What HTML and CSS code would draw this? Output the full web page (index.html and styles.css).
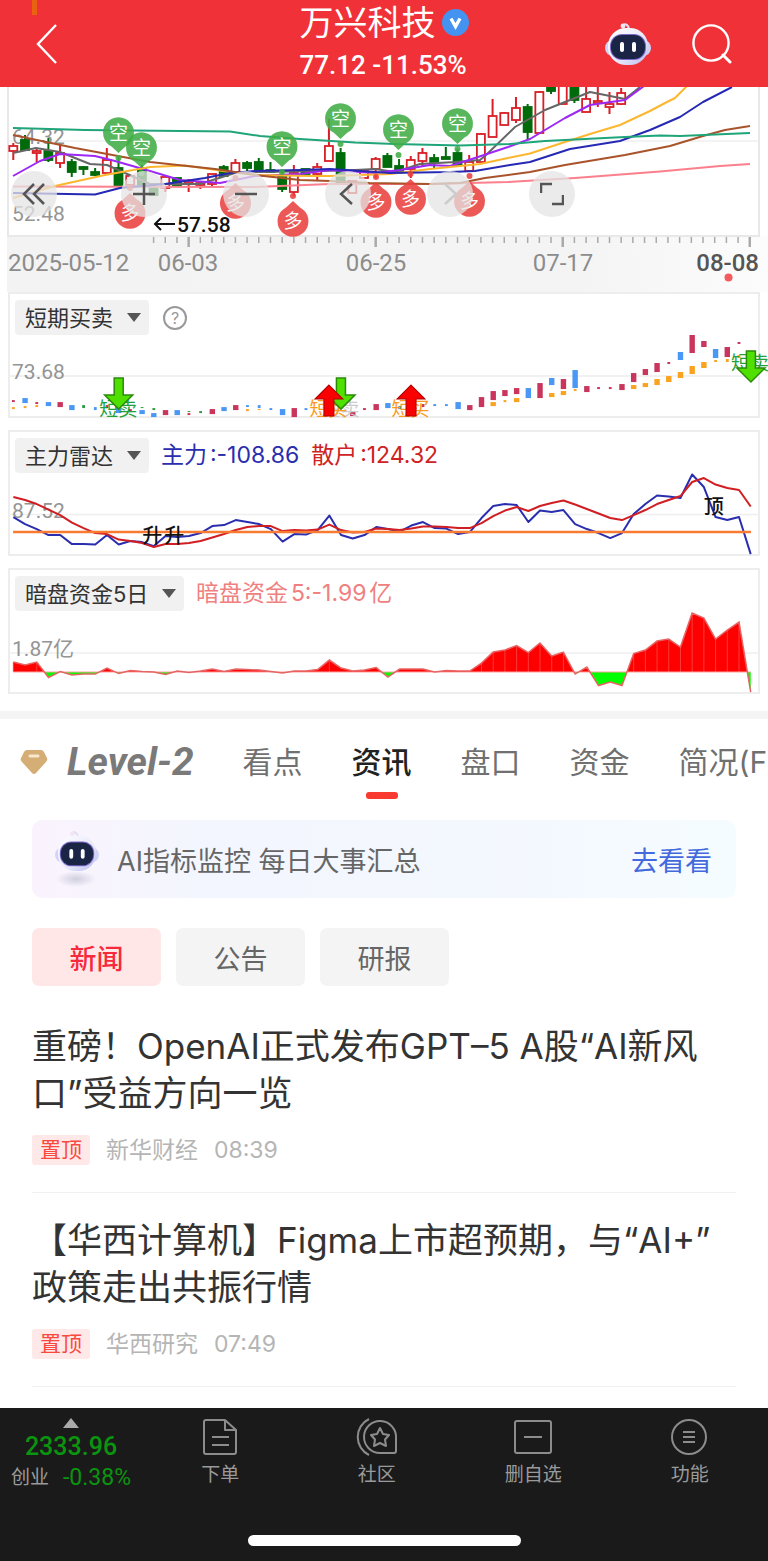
FILE: index.html
```html
<!DOCTYPE html>
<html lang="zh-CN">
<head>
<meta charset="utf-8">
<meta name="viewport" content="width=device-width, initial-scale=1">
<title>万兴科技</title>
<link rel="stylesheet" href="styles.css">
</head>
<body>
<svg class="defs" aria-hidden="true">
  <defs>
    <linearGradient id="shell" x1="0" y1="0" x2="1" y2="1">
      <stop offset="0" stop-color="#ffffff"/><stop offset="0.6" stop-color="#e6e8fb"/><stop offset="1" stop-color="#b9b8ec"/>
    </linearGradient>
    <radialGradient id="shade"><stop offset="0" stop-color="#cfcfdc"/><stop offset="1" stop-color="#cfcfdc" stop-opacity="0"/></radialGradient>
    <symbol id="robot" viewBox="0 0 48 44">
      <path d="M19 4C20 1 24 2 25 7" fill="none" stroke="#e4dcf2" stroke-width="2"/>
      <circle cx="19" cy="4" r="2.4" fill="#f3e6f4"/>
      <rect x="1" y="18" width="46" height="16" rx="8" fill="#cfd3f5"/>
      <rect x="4" y="6" width="40" height="37" rx="18" fill="url(#shell)"/>
      <rect x="6" y="12" width="36" height="26" rx="12" fill="#7a67c8"/>
      <rect x="7" y="13" width="34" height="24" rx="11" fill="#1a2546"/>
      <rect x="16" y="20" width="4" height="10" rx="2" fill="#fff"/>
      <rect x="28" y="20" width="4" height="10" rx="2" fill="#fff"/>
    </symbol>
  </defs>
</svg>

<header class="topbar">
  <span class="topbar-mark"></span>
  <button class="icon-btn back" type="button" aria-label="返回">
    <svg width="22" height="40" viewBox="0 0 22 40"><path d="M20 1 2 20 20 39" fill="none" stroke="#fff" stroke-width="2.4"/></svg>
  </button>
  <div class="stock">
    <h1 class="stock-name">万兴科技
      <svg class="badge" width="27" height="27" viewBox="0 0 27 27"><circle cx="13.500" cy="13.500" r="13.500" fill="#4593f0"/><path d="M9 9.500 13.500 17.500 18 9.500" fill="none" stroke="#fff" stroke-width="3.400"/></svg>
    </h1>
    <p class="stock-price">77.12 -11.53%</p>
  </div>
  <div class="topbar-tools">
    <button class="icon-btn" type="button" aria-label="智能助手"><svg width="48" height="44"><use href="#robot"/></svg></button>
    <button class="icon-btn" type="button" aria-label="搜索">
      <svg width="40" height="40" viewBox="0 0 40 40"><g fill="none" stroke="#fff" stroke-width="2.400"><circle cx="19" cy="19" r="17.600"/><path d="M31 31 38 38" stroke-linecap="round" stroke-width="3"/></g></svg>
    </button>
  </div>
</header>

<main class="content">
  <section class="kline" aria-label="K线图">
    <svg id="kline" class="kline-svg" viewBox="0 87 768 205">
      <defs><linearGradient id="axisbg" x1="0" x2="1"><stop offset="0" stop-color="#f3f3f3"/><stop offset="0.750" stop-color="#f4f4f4"/><stop offset="1" stop-color="#fcfcfc"/></linearGradient></defs>
      <rect x="7" y="236" width="761" height="56" fill="url(#axisbg)"/>
      <path d="M8 141H759" stroke="#efefef" stroke-width="1.500"/>
      <path d="M8 87V236H759V87" fill="none" stroke="#e8e8e8" stroke-width="2"/>
      <text class="scale" x="12" y="144">64.32</text>
      <text class="scale" x="12" y="221">52.48</text>
      <g id="candles"></g>
      <g fill="none" stroke-width="2" stroke-linejoin="round">
        <path stroke="#fb7f8c" d="M13 186.500 255 187 330 184 430 184 508 182 575 178 660 171.500 720 166 750 164"/>
        <path stroke="#666" d="M13 153 36 148 60 152 90 164 107 165 125 173 150 184 200 184 235 173 260 172 320 171 355 170 375 169 395 172 420 164 455 162 480 160 485 156 515 127 545 110 590 92 625 99 640 87"/>
        <path stroke="#9d28f5" d="M13 176 40 161 60 154 95 156 115 161 150 171 180 180 220 183 255 176 300 174 330 170 375 173 400 170 430 165 450 166 475 158 508 147 530 139 565 118 590 105 625 100 640 89 644 86"/>
        <path stroke="#fcb72f" d="M13 198 55 186 105 175 150 167 185 165.500 230 172 255 175 310 176 330 176 390 174 430 169 480 164 508 158 530 153.500 565 142 590 134 620 125 650 111 665 103 675 98 687 86"/>
        <path stroke="#2629b4" d="M13 193 95 194.500 120 188 165 184 205 178 230 173 255 171 300 170 330 169 390 173 450 172 475 171 510 165 530 162 570 149 620 141 650 130 680 117 703 102 732 87"/>
        <path stroke="#a9532b" d="M13 135 75 148 150 162 215 169 255 175 300 180 330 181 370 183 430 184 460 183 485 178 530 172 565 165 625 155 670 146 703 136 725 130 750 126"/>
        <path stroke="#1fa579" d="M13 128 50 129 85 130 230 131.500 260 136 300 139 355 142.500 395 144 460 145.500 510 144 545 141 625 137 660 135.500 680 136 750 133"/>
      </g>
      <g id="signals"></g>
      <path d="M155 224H175M161 218 155 224 161 230" fill="none" stroke="#111" stroke-width="2"/>
      <text class="low" x="177" y="232">57.58</text>
      <g id="ticks" stroke="#aaa"></g>
      <text class="date" x="8" y="271">2025-05-12</text>
      <text class="date mid" x="188" y="271">06-03</text>
      <text class="date mid" x="376" y="271">06-25</text>
      <text class="date mid" x="563" y="271">07-17</text>
      <text class="date end" x="759" y="271">08-08</text>
      <circle cx="728.500" cy="277.500" r="4" fill="#f35b5e"/>
    </svg>
    <div class="chart-tools">
      <button class="round first" type="button" aria-label="最左"><svg width="24" height="24" viewBox="0 0 24 24"><path d="M12 2 2 12 12 22M22 2 12 12 22 22"/></svg></button>
      <button class="round" type="button" aria-label="放大"><svg width="24" height="24" viewBox="0 0 24 24"><path d="M12 1V23M1 12H23"/></svg></button>
      <button class="round" type="button" aria-label="缩小"><svg width="24" height="24" viewBox="0 0 24 24"><path d="M1 12H23"/></svg></button>
      <button class="round" type="button" aria-label="左移"><svg width="24" height="24" viewBox="0 0 24 24"><path d="M16 2 5 12 16 22"/></svg></button>
      <button class="round off" type="button" aria-label="右移" disabled><svg width="24" height="24" viewBox="0 0 24 24"><path d="M7 2 18 12 7 22"/></svg></button>
      <button class="round" type="button" aria-label="全屏"><svg width="24" height="24" viewBox="0 0 24 24"><path d="M1 11V2H12M23 13V22H12" stroke-width="3"/></svg></button>
    </div>
  </section>

  <section class="panel">
    <div class="panel-head">
      <label class="pick"><select aria-label="指标一"><option>短期买卖</option></select><svg class="caret" width="14" height="9"><path d="M0 0H14L7 9Z"/></svg></label>
      <button class="icon-btn help" type="button" aria-label="帮助">?</button>
    </div>
    <svg class="plot" viewBox="10 335 747 81">
      <path d="M10 376H757" stroke="#ececec" stroke-width="1.500"/>
      <text class="scale" x="12" y="379">73.68</text>
      <g id="trade"></g>
      <g class="sign">
        <text class="sell" x="118" y="416">短卖</text>
        <text class="faded" x="340" y="416">短卖</text>
        <text class="buy" x="328" y="416">短买</text>
        <text class="buy" x="410" y="416">短买</text>
        <text class="sell" x="749" y="370">短卖</text>
      </g>
      <g id="arrows"></g>
    </svg>
  </section>

  <section class="panel">
    <div class="panel-head">
      <label class="pick"><select aria-label="指标二"><option>主力雷达</option></select><svg class="caret" width="14" height="9"><path d="M0 0H14L7 9Z"/></svg></label>
      <span class="value blue">主力:-108.86</span><span class="value red">散户:124.32</span>
    </div>
    <svg class="plot" viewBox="10 473 747 81">
      <path d="M10 514.500H757" stroke="#efefef" stroke-width="1.500"/>
      <text class="scale" x="12" y="518">87.52</text>
      <g id="radar" fill="none" stroke-width="2" stroke-linejoin="round"></g>
      <text class="mark" x="152" y="543">升</text><text class="mark" x="174" y="543">升</text><text class="mark" x="713" y="514">顶</text>
    </svg>
  </section>

  <section class="panel">
    <div class="panel-head">
      <label class="pick"><select aria-label="指标三"><option>暗盘资金5日</option></select><svg class="caret" width="14" height="9"><path d="M0 0H14L7 9Z"/></svg></label>
      <span class="value pink">暗盘资金5:-1.99亿</span>
    </div>
    <svg class="plot" viewBox="10 611 747 81">
      <defs>
        <clipPath id="above"><rect x="0" y="600" width="768" height="72"/></clipPath>
        <clipPath id="below"><rect x="0" y="672" width="768" height="22"/></clipPath>
      </defs>
      <path d="M10 653H757" stroke="#efefef" stroke-width="1.500"/>
      <text class="scale" x="12" y="656">1.87亿</text>
      <g id="flow"></g>
    </svg>
  </section>

  <nav class="tabs" aria-label="栏目">
    <svg class="gem" width="28" height="26" viewBox="0 0 28 26"><path d="M7 1H21Q23 1 24 3L27 9Q28 11 26 13L16 24Q14 26 12 24L2 13Q0 11 1 9L4 3Q5 1 7 1Z" fill="#d5ae76"/><path d="M10 7H18" stroke="#f8e8cd" stroke-width="3" stroke-linecap="round"/></svg>
    <a class="tab level" href="#level2">Level-2</a>
    <a class="tab" href="#views">看点</a>
    <a class="tab current" href="#news" aria-current="page">资讯</a>
    <a class="tab" href="#book">盘口</a>
    <a class="tab" href="#funds">资金</a>
    <a class="tab" href="#profile">简况(F10)</a>
  </nav>

  <div class="feed" id="news">
    <div class="banner">
      <svg class="banner-bot" width="46" height="58" viewBox="0 0 46 58"><ellipse cx="22" cy="49" rx="20" ry="8" fill="url(#shade)"/><use href="#robot" x="0" y="0" width="46" height="42"/></svg>
      <span class="banner-text">AI指标监控 每日大事汇总</span>
      <a class="banner-link" href="#monitor">去看看</a>
    </div>
    <div class="chips">
      <button class="chip on" type="button">新闻</button>
      <button class="chip" type="button">公告</button>
      <button class="chip" type="button">研报</button>
    </div>
    <article class="story">
      <h2 class="story-title">重磅！OpenAI正式发布GPT–5 A股“AI新风口”受益方向一览</h2>
      <p class="story-meta"><span class="pin">置顶</span><span>新华财经</span><time>08:39</time></p>
    </article>
    <article class="story">
      <h2 class="story-title">【华西计算机】Figma上市超预期，与“AI+”政策走出共振行情</h2>
      <p class="story-meta"><span class="pin">置顶</span><span>华西研究</span><time>07:49</time></p>
    </article>
  </div>
</main>

<footer class="dock">
  <div class="dock-row">
    <button class="index" type="button">
      <svg width="16" height="10"><path d="M8 0 16 10H0Z" fill="#aaa"/></svg>
      <span class="index-value">2333.96</span>
      <span class="index-line"><span class="index-name">创业</span><span>-0.38%</span></span>
    </button>
    <button class="dock-item" type="button">
      <svg width="38" height="38" viewBox="0 0 38 38"><path d="M24 2H5Q3 2 3 4V34Q3 36 5 36H33Q35 36 35 34V12L24 2V12H35"/><path d="M11 19H28M11 27H28"/></svg>
      <span>下单</span>
    </button>
    <button class="dock-item" type="button">
      <svg width="42" height="38" viewBox="0 0 42 38"><path d="M40 20V33Q40 35 38 35H24A16 16 0 1 1 40 20Z"/><path d="M13 1A20 20 0 0 0 13 37"/><path d="M24 10 27 16 33 17 29 21.500 30 28 24 25 18 28 19 21.500 15 17 21 16Z"/></svg>
      <span>社区</span>
    </button>
    <button class="dock-item" type="button">
      <svg width="40" height="38" viewBox="0 0 40 38"><rect x="2" y="3" width="36" height="32" rx="2"/><path d="M11 19H29"/></svg>
      <span>删自选</span>
    </button>
    <button class="dock-item" type="button">
      <svg width="38" height="38" viewBox="0 0 38 38"><circle cx="18" cy="19" r="17"/><path d="M12 14H24M12 19H24M12 24H24"/></svg>
      <span>功能</span>
    </button>
  </div>
  <div class="home-bar"></div>
</footer>
<script src="charts.js"></script>
</body>
</html>
```
FILE: styles.css
```css
* { box-sizing: border-box; }

body {
  margin: 0;
  min-height: 100vh;
  display: flex;
  flex-direction: column;
  background: #fff;
  color: #333;
  font-family: Inter, "Noto Sans CJK SC", sans-serif;
}

h1, h2, p { margin: 0; font-weight: 400; }
a { color: inherit; text-decoration: none; }
button { border: 0; padding: 0; background: none; font: inherit; color: inherit; }
svg { display: block; }
.defs { position: absolute; width: 0; height: 0; }

.topbar {
  position: relative;
  display: grid;
  grid-template-columns: 1fr auto 1fr;
  align-items: center;
  height: 87px;
  padding: 0 36px;
  background: #f03238;
  color: #fff;
}
.topbar-mark { position: absolute; left: 32px; top: 0; width: 5px; height: 15px; background: #e8620f; }
.icon-btn { display: flex; align-items: center; justify-content: center; }
.back { justify-self: start; }
.stock-name { display: flex; align-items: center; gap: 6px; font-size: 34px; line-height: 42px; }
.stock-price { font: 500 26px/42px Roboto, sans-serif; }
.topbar-tools { display: flex; justify-content: flex-end; align-items: center; gap: 40px; }

.content { overflow: hidden; }
.kline { position: relative; }
.kline-svg { width: 100%; height: auto; }
.scale { font: 21px Roboto, "Noto Sans CJK SC", sans-serif; fill: #949494; }
.date { font: 24px Roboto, sans-serif; fill: #8c8c8c; }
.date.mid { text-anchor: middle; }
.date.end { text-anchor: end; fill: #555; font-weight: 500; }
.low { font: 500 21px Roboto, sans-serif; fill: #111; }
.signal-text { font: 19px "Noto Sans CJK SC", sans-serif; fill: #fff; text-anchor: middle; }

.chart-tools {
  position: absolute;
  left: 11px;
  top: 41%;
  width: 73.4%;
  display: flex;
  justify-content: space-between;
}
.round {
  display: grid;
  place-items: center;
  width: 46px;
  height: 46px;
  border-radius: 50%;
  background: rgba(228, 228, 228, 0.75);
}
.round.first { margin-right: 8px; }
.round path { fill: none; stroke: #555; stroke-width: 2.5; }
.round.off path { stroke: #ccc; }

.panel { margin: 0 8px 12px; border: 2px solid #ededed; }
.panel-head { display: flex; align-items: center; gap: 12px; padding: 6px 5px 0; }
.pick { position: relative; display: flex; align-items: center; }
.pick select {
  appearance: none;
  height: 35px;
  padding: 0 35px 0 10px;
  border: 0;
  border-radius: 4px;
  background: #f1f1f1;
  color: #333;
  font: 22px Inter, "Noto Sans CJK SC", sans-serif;
  text-autospace: normal;
}
.caret { position: absolute; right: 8px; fill: #555; pointer-events: none; }
.help {
  width: 24px;
  height: 24px;
  margin-left: 2px;
  border: 2px solid #999;
  border-radius: 50%;
  color: #999;
  font-size: 16px;
  line-height: 20px;
}
.value { font-size: 23px; line-height: 35px; text-autospace: normal; }
.blue { color: #2a2eae; }
.red { color: #cf2222; }
.pink { color: #f08080; }
.plot { width: 100%; height: auto; overflow: visible; }
.sign { font: 19px "Noto Sans CJK SC", sans-serif; text-anchor: middle; }
.sell { fill: #22a03c; }
.buy { fill: #fb9a20; }
.faded { fill: #ccc; }
.mark { font: 500 20px "Noto Sans CJK SC", sans-serif; fill: #111; text-anchor: middle; }

.tabs {
  display: flex;
  align-items: center;
  gap: 49px;
  height: 94px;
  margin-top: 17px;
  padding-left: 20px;
  border-top: 8px solid #f4f4f4;
  white-space: nowrap;
}
.gem { flex: none; margin-right: -30px; }
.tab { position: relative; color: #707070; font-size: 30px; line-height: 44px; }
.level { font: italic 700 39px/44px Roboto, sans-serif; color: #7a7a7a; }
.current { color: #222; font-weight: 500; }
.current::after {
  content: "";
  position: absolute;
  left: 50%;
  bottom: -15px;
  width: 32px;
  height: 7px;
  margin-left: -16px;
  border-radius: 3px;
  background: #f93a30;
}

.feed { padding: 15px 32px 18px; }
.banner {
  display: flex;
  align-items: center;
  height: 78px;
  padding: 0 24px 0 22px;
  border-radius: 10px;
  background: linear-gradient(90deg, #faf3fe, #f3f6fe 24%, #f3f7fe 60%, #f5fcff);
}
.banner-text { margin-left: 17px; color: #666; font-size: 27px; }
.banner-link { margin-left: auto; color: #4369dc; font-size: 27px; }
.chips { display: flex; gap: 15px; margin: 30px 0 13px; }
.chip { width: 129px; height: 58px; border-radius: 7px; background: #f4f4f4; color: #666; font-size: 27px; }
.chip.on { background: #ffe7e8; color: #f7293c; font-weight: 500; }

.story { padding: 24px 0 27px; border-bottom: 1px solid #f1f1f1; }
.story-title { font-size: 35px; line-height: 47px; color: #333; }
.story-meta {
  display: flex;
  align-items: center;
  gap: 16px;
  margin-top: 18px;
  color: #b5b5b5;
  font-size: 23px;
  line-height: 30px;
}
.pin { padding: 0 8px; border-radius: 3px; background: #ffe8e8; color: #f9493f; font-size: 21px; }

.dock { margin-top: auto; padding-bottom: 15px; background: #1a1a1a; color: #9a9a9a; }
.dock-row { display: grid; grid-template-columns: 142px repeat(4, 1fr); height: 127px; align-items: start; }
.index { display: flex; flex-direction: column; align-items: center; padding-top: 10px; color: #0a9410; font: 500 25px/38px Roboto, "Noto Sans CJK SC", sans-serif; }
.index-value { line-height: 38px; }
.index-line { display: flex; align-items: center; gap: 14px; font-size: 23px; font-weight: 400; line-height: 24px; }
.index-name { color: #9a9a9a; font-size: 19px; }
.dock-item { display: flex; flex-direction: column; align-items: center; gap: 5px; padding-top: 10px; font-size: 19px; line-height: 28px; }
.dock-item svg { fill: none; stroke: #8c8c8c; stroke-width: 2; stroke-linejoin: round; }
.home-bar { width: 273px; height: 11px; margin: 0 auto; border-radius: 6px; background: #fff; }
```
FILE: charts.js
```js
const STEP = 11.69;
const xAt = i => 13.3 + STEP * i;
const put = (id, markup) => { document.getElementById(id).innerHTML = markup; };

// Candles: direction, body top, body bottom, wick top, wick bottom
const candles = [
  ['u',146,151,143,160],['d',140,150,135,150],['u',151,153,148,162],['d',151,160,138,162],
  ['u',153,163,145,168],['d',162,172,159,177],['d',167,169,166,175],['d',172,175,168,176],
  ['u',160,173,148,173],['d',168,186,157,186],['u',176,185,176,185],['d',168,185,165,185],
  ['d',188,195,188,195],['u',177,188,177,192],['d',178,186,178,186],['u',182,184,179,192],
  ['u',183,185,181,189],['u',174,184,174,187],['d',167,176,165,176],['u',163,172,159,172],
  ['d',163,168,161,172],['d',162,170,158,170],['d',170,172,162,173],['d',177,189,172,192],
  ['u',173,192,165,196],['d',169,174,169,174],['u',167,174,163,180],['u',146,161,119,161],
  ['d',153,184,148,184],['u',181,193,181,193],['u',171,178,171,178],['u',159,169,157,178],
  ['d',156,167,153,167],['d',166,171,159,171],['u',160,169,156,178],['u',153,161,148,167],
  ['d',158,162,154,168],['d',157,159,147,159],['d',153,165,149,165],['u',162,171,155,171],
  ['u',134,162,133,162],['u',116,137,99,137],['u',113,125,112,125],['u',108,120,97,123],
  ['d',107,132,104,140],['u',92,133,91,133],['d',86,91,86,94],['u',80,104,80,104],
  ['d',80,100,80,103],['u',99,112,80,112],['u',101,103,86,107],['u',104,107,92,114],
  ['u',93,104,88,105]
];
put('candles', candles.map(([dir, top, bottom, high, low], i) => {
  const x = xAt(i);
  const up = dir === 'u';
  const color = up ? '#d81e26' : '#006b0a';
  return `<path d="M${x} ${high}V${top}M${x} ${bottom}V${low}" stroke="${color}" stroke-width="2"/>` +
    `<rect x="${x - 4}" y="${top}" width="8" height="${bottom - top}" fill="${up ? '#fff' : color}" stroke="${color}" stroke-width="1.8"/>`;
}).join(''));

const shorts = [[118.5,133],[141.5,148],[282,147],[340.5,119],[398.5,130],[457.5,124]];
const longs = [[130,213],[235.5,203],[293,221],[376,202],[410.5,199],[469.5,201]];
const pin = (x, y, s, color, label) =>
  `<g fill="${color}" fill-opacity="0.88"><path d="M${x - 7} ${y + 13.5 * s}A15.500 15.500 0 1 ${s > 0 ? 1 : 0} ${x + 7} ${y + 13.5 * s}L${x} ${y + 20 * s}Z"/>` +
  `<circle cx="${x}" cy="${y + 25 * s}" r="3"/></g><text class="signal-text" x="${x}" y="${y + 7}">${label}</text>`;
put('signals', shorts.map(([x, y]) => pin(x, y, 1, '#41ad45', '空')).join('') +
  longs.map(([x, y]) => pin(x, y, -1, '#e9413f', '多')).join(''));

let ticks = '';
for (let i = 12; i < 64; i++) {
  const major = i % 16 === 15;
  ticks += `<path d="M${xAt(i)} 237V${major ? 247 : 243}" stroke-width="${major ? 2.5 : 1.5}"/>`;
}
put('ticks', ticks);

// Short-term bars: column, colour, top, bottom
const palette = { r: '#c9355c', b: '#4a97f5', o: '#fba21f', g: '#2d9b43' };
const bars = [
  [0,'r',400,402],[0,'o',407,409],[1,'b',398,403],[1,'o',406,408],[2,'r',402,404],[2,'o',405,407],
  [3,'b',402,406],[4,'r',402,407],[5,'b',405,410],[6,'g',405,408],[7,'b',407,410],[8,'r',405,408],
  [9,'b',408,413],[10,'r',409,412],[11,'b',410,414],[11,'g',407,408],[12,'b',413,417],[12,'g',408,410],
  [13,'r',410,415],[14,'b',410,415],[15,'r',413,415],[15,'g',411,412],[16,'g',411,413],[17,'r',409,414],
  [18,'b',407,411],[19,'r',405,410],[20,'b',405,407],[20,'o',409,411],[21,'b',405,408],[21,'o',409,410],
  [22,'b',408,410],[23,'b',409,415],[24,'r',408,417],[25,'b',408,410],[29,'r',411,416],[30,'r',408,410],
  [31,'r',404,410],[32,'b',403,408],[33,'b',406,409],[35,'r',404,407],[36,'b',404,406],[37,'b',404,406],
  [38,'b',402,409],[39,'r',405,410],[40,'r',397,407],[41,'r',391,400],[41,'o',402,406],[42,'r',390,396],
  [42,'o',400,402],[43,'r',388,394],[43,'o',398,402],[44,'b',388,398],[45,'r',383,398],[46,'b',378,385],
  [46,'o',393,397],[47,'r',379,389],[47,'o',391,395],[48,'b',370,388],[48,'o',389,391],[49,'r',386,392],
  [50,'r',387,389],[51,'r',387,389],[52,'r',384,390],[53,'r',373,382],[53,'o',385,389],[54,'r',369,375],
  [54,'o',383,387],[55,'r',363,372],[55,'o',379,385],[56,'r',362,364],[56,'o',376,382],[57,'b',352,360],
  [57,'o',372,378],[58,'r',335,353],[58,'o',366,374],[59,'r',341,347],[59,'o',362,368],[60,'b',349,358],
  [60,'o',360,362],[61,'r',347,357],[61,'o',359,362],[62,'r',342,344],[62,'o',355,358]
];
put('trade', bars.map(([i, c, top, bottom]) => {
  const w = bottom - top > 3 ? 5.4 : 2.8;
  return `<rect x="${xAt(i) - w / 2}" y="${top}" width="${w}" height="${bottom - top}" fill="${palette[c]}"/>`;
}).join(''));

const down = (x, y) => `<path d="M${x - 4.500} ${y}H${x + 4.500}V${y + 17}H${x + 14}L${x} ${y + 31}L${x - 14} ${y + 17}H${x - 4.500}Z" fill="#4fe000" stroke="#2b8a08" stroke-width="1.500"/>`;
const rise = (x, y) => `<path d="M${x} ${y}L${x + 14} ${y + 14}H${x + 5}V${y + 31}H${x - 5}V${y + 14}H${x - 14}Z" fill="#fb0000" stroke="#b00000"/>`;
put('arrows', down(118.5, 378) + down(340.5, 378) + rise(328.500, 385) + rise(410.500, 385) + down(750, 351));

const main = [517,524,529,535,535,544,544,544.5,535,544.5,541,542,546,536,537,536,533,526,525,520,522,524,529,541.5,534,534.5,530,515.5,535,538.5,535,527,529,531.5,525.5,522,528,528.5,534,532,518,506,504,505,522,510.5,512,510,524,529,533,538,533,514,504,495.5,496.5,498,474.5,487,517,520,517,554];
const retail = [497,500,504,509.5,515,522.5,528,533,534,539.5,541,543,547,544,544,543,541,537.5,534,530,527,526,526,531,530,530.5,529.5,524.5,530,532.5,532,528.5,529,530,528.5,526.5,526.5,527,528,528,523,516,510.5,507,511,506,503,500.5,504.5,509,513.5,518,520,515,510,504,500,496,482,478,484.5,488,490,506.5];
const flow = [662,665,662,677.5,671.5,675,674,674,668,673.5,670.5,671.5,672,674.5,671,672.5,671,669,671.5,669,669.5,670,671.5,673,671,671,669.5,660,668,671,670,667.5,677,669,669,669,672,670.5,671,671,663,652,650,645.5,652.5,643,656,652,674,667,685.5,682,685.5,653.5,650,641,639,647,613,618,639,630,622,692];
const trace = values => values.map((y, i) => `${i ? 'L' : 'M'}${xAt(i).toFixed(1)} ${y}`).join('');
put('radar', `<path d="${trace(main)}" stroke="#2a2eae"/><path d="${trace(retail)}" stroke="#d01e22"/><path d="M13 532H750" stroke="#f87b31" stroke-width="2.500"/>`);
const area = `${trace(flow)}V672H13.300Z`;
const seams = flow.map((y, i) => y < 665 ? `M${xAt(i)} ${y}V672` : '').join('');
put('flow', `<path d="${area}" fill="#f00" clip-path="url(#above)"/><path d="${area}" fill="#0f0" clip-path="url(#below)"/>` +
  `<path d="${seams}" stroke="#fc3a3a" stroke-width="1"/><path d="M13 672H750" stroke="#fba0a0"/><path d="${trace(flow)}" fill="none" stroke="#e86464" stroke-width="1.500"/>`);
```
